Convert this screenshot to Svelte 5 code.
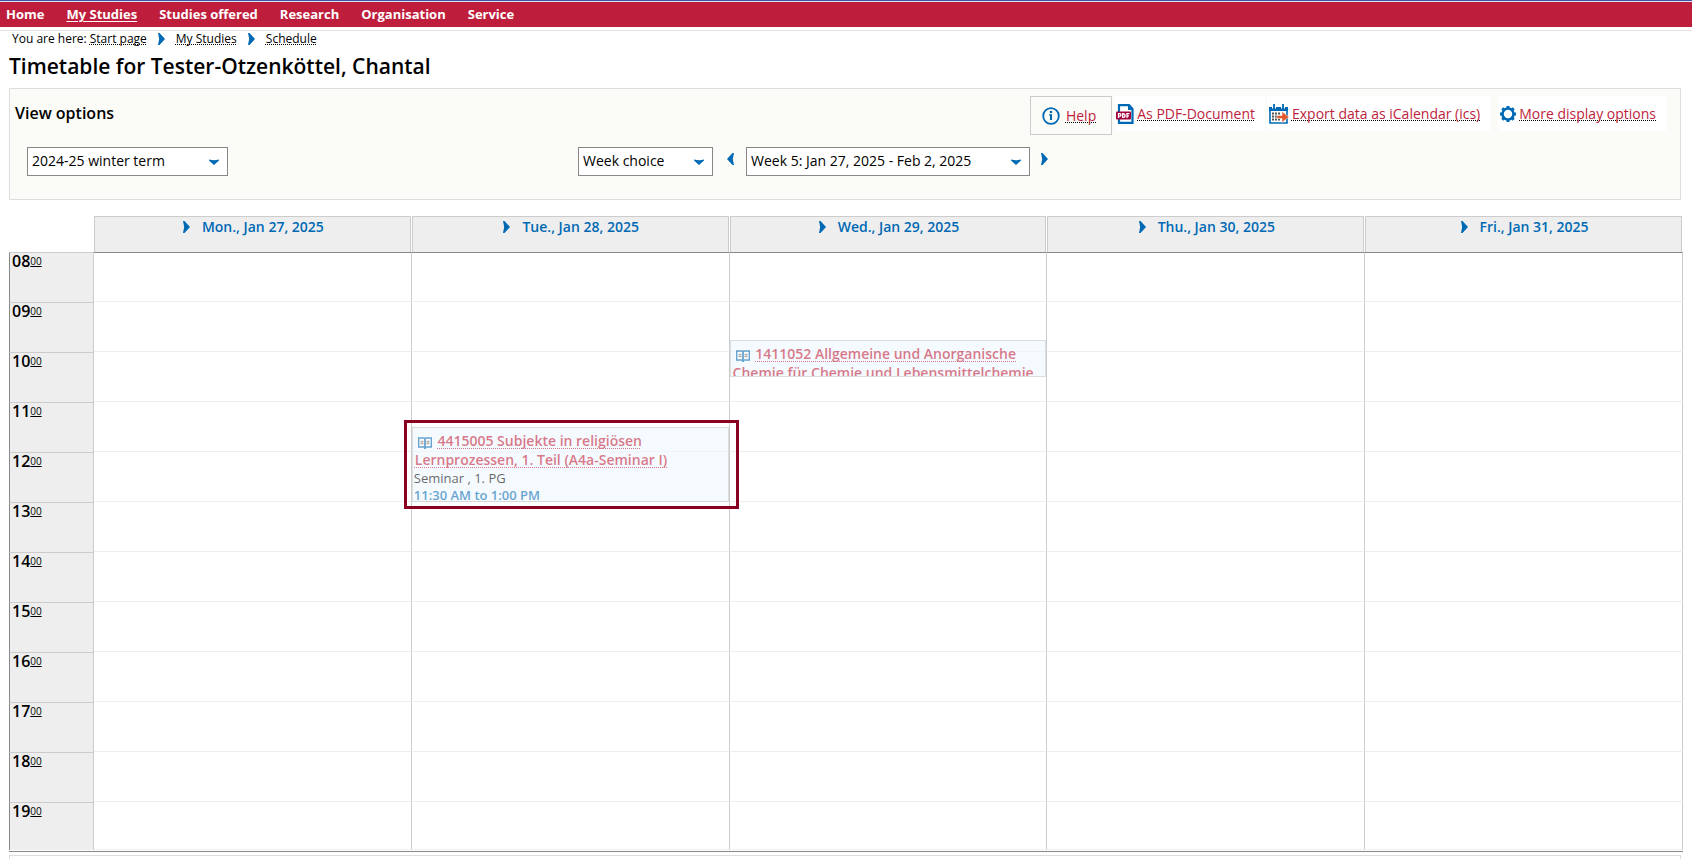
<script>
    const HOUR = 50
    const START = 8

    const nav = ["Home", "My Studies", "Studies offered", "Research", "Organisation", "Service"]
    const crumbs = ["Start page", "My Studies", "Schedule"]
    const days = ["Mon., Jan 27, 2025", "Tue., Jan 28, 2025", "Wed., Jan 29, 2025", "Thu., Jan 30, 2025", "Fri., Jan 31, 2025"]
    const hours = Array.from({ length: 12 }, (_, i) => START + i)

    const events = [
        {
            day: 1,
            from: 11.5,
            to: 13,
            title: "4415005 Subjekte in religiösen Lernprozessen, 1. Teil (A4a-Seminar I)",
            type: "Seminar , 1. PG",
            time: "11:30 AM to 1:00 PM",
            marked: true
        },
        {
            day: 2,
            from: 9.75,
            to: 10.5,
            title: "1411052 Allgemeine und Anorganische Chemie für Chemie und Lebensmittelchemie"
        }
    ]

    let term = $state("2024-25 winter term")
    let mode = $state("Week choice")
    let week = $state("Week 5: Jan 27, 2025 - Feb 2, 2025")

    const eventsAt = (day, hour) => events.filter(e => e.day === day && Math.floor(e.from) === hour)
    const pad = n => String(n).padStart(2, "0")
</script>

{#snippet chevron()}
    <svg class="chevron" width="7" height="12" viewBox="0 0 7 12" aria-hidden="true">
        <path d="M0 0h1.500L7 6 1.500 12H0l1.200-6z" fill="#0069b4" />
    </svg>
{/snippet}

{#snippet caret()}
    <svg class="caret" width="10" height="6" viewBox="0 0 10 6" aria-hidden="true">
        <path d="M0 0.500Q5 2 10 0.500V1.500L5 6 0 1.500z" fill="#0069b4" />
    </svg>
{/snippet}

<nav class="main-nav">
    {#each nav as item}
        <a href="#top" class:current={item === "My Studies"}>{item}</a>
    {/each}
</nav>

<div class="breadcrumb">
    <span>You are here:</span>
    {#each crumbs as crumb, i}
        {#if i > 0}{@render chevron()}{/if}
        <a class="dotted" href="#top">{crumb}</a>
    {/each}
</div>

<main>
    <h1>Timetable for Tester-Otzenköttel, Chantal</h1>

    <section class="options">
        <div class="options-head">
            <h2>View options</h2>
            <div class="tools">
                <a class="tool help" href="#help">
                    <svg width="18" height="18" viewBox="0 0 18 18" aria-hidden="true">
                        <circle cx="9" cy="9" r="7.800" fill="none" stroke="#0069b4" stroke-width="1.800" />
                        <circle cx="9" cy="5" r="1.300" fill="#0069b4" />
                        <path d="M7 7.300h3v5.700h-2V8.500H7z" fill="#0069b4" />
                    </svg>
                    <span class="dotted">Help</span>
                </a>
                <a class="tool" href="#pdf">
                    <svg width="18" height="20" viewBox="0 0 18 20" aria-hidden="true">
                        <path d="M3 8V1.200h10L16.500 5v13.800H3V15" fill="#fff" stroke="#0069b4" stroke-width="2.200" />
                        <path d="M12 1v5h5z" fill="#0069b4" />
                        <rect y="7.500" width="15" height="8" rx="1" fill="#a3003c" />
                        <path d="M2.500 14V9.700h1.200a1.200 1.200 0 0 1 0 2.500H2.500M6.700 9.700v3.700h.5a1.800 1.800 0 0 0 0-3.700zM11 14V9.700h2.500M11 11.800h2" fill="none" stroke="#fff" stroke-width="1.300" />
                    </svg>
                    <span class="dotted">As PDF-Document</span>
                </a>
                <a class="tool" href="#ics">
                    <svg width="20" height="20" viewBox="0 0 20 20" aria-hidden="true">
                        <path d="M1 4h17v15H1z" fill="#fff" stroke="#0069b4" stroke-width="1.600" />
                        <path d="M0 3h19v4H0z" fill="#0069b4" />
                        <path d="M5 0v4.500M14 0v4.500" stroke="#fff" stroke-width="4" />
                        <path d="M5 0v5M14 0v5" stroke="#0069b4" stroke-width="1.800" />
                        <path d="M3 9.500h9M3 12.500h5M3 15.500h9" stroke="#555" stroke-width="2" stroke-dasharray="2 1" />
                        <path d="M8 11.500h5V7.500L20 13l-7 5.500v-4H8z" fill="#e3592b" stroke="#fff" stroke-width=".5" />
                    </svg>
                    <span class="dotted">Export data as iCalendar (ics)</span>
                </a>
                <a class="tool more" href="#more">
                    <svg width="16" height="16" viewBox="0 0 16 16" aria-hidden="true">
                        <circle cx="8" cy="8" r="5.500" fill="none" stroke="#0069b4" stroke-width="2.600" />
                        <path d="M8 0v2.500M8 13.500V16M0 8h2.500M13.500 8H16M2.300 2.300l1.700 1.700M12 12l1.700 1.700M2.300 13.700L4 12M12 4l1.700-1.700" stroke="#0069b4" stroke-width="3" />
                    </svg>
                    <span class="dotted">More display options</span>
                </a>
            </div>
        </div>

        <div class="filters">
            <div class="select term">
                <select aria-label="Term" bind:value={term}>
                    <option>2024-25 winter term</option>
                </select>
                {@render caret()}
            </div>
            <div class="week-nav">
                <div class="select mode">
                    <select aria-label="Display mode" bind:value={mode}>
                        <option>Week choice</option>
                    </select>
                    {@render caret()}
                </div>
                <button class="prev" aria-label="Previous week">{@render chevron()}</button>
                <div class="select week">
                    <select aria-label="Week" bind:value={week}>
                        <option>Week 5: Jan 27, 2025 - Feb 2, 2025</option>
                    </select>
                    {@render caret()}
                </div>
                <button class="next" aria-label="Next week">{@render chevron()}</button>
            </div>
        </div>
    </section>

    <table>
        <thead>
            <tr>
                <td class="corner"></td>
                {#each days as day}
                    <th scope="col">
                        <a class="day" href="#day">{@render chevron()}{day}</a>
                    </th>
                {/each}
            </tr>
        </thead>
        <tbody>
            {#each hours as hour}
                <tr>
                    <th scope="row">{pad(hour)}<sup>00</sup></th>
                    {#each days as _, day}
                        <td>
                            {#each eventsAt(day, hour) as event}
                                <div
                                    class="slot"
                                    class:marked={event.marked}
                                    style="top: {Math.round((event.from - hour) * HOUR)}px; height: {Math.floor((event.to - event.from) * HOUR)}px"
                                >
                                    <div class="event">
                                        <div class="title">
                                            <svg width="14" height="12" viewBox="0 0 14 12" aria-hidden="true">
                                                <path d="M.7 1H6q1 0 1 1 0-1 1-1h5.300v9H8.500L7 11 5.500 10H.7z" fill="#fff" stroke="#0069b4" stroke-width="1.400" />
                                                <path d="M7 1.500V12" stroke="#0069b4" stroke-width="1.800" />
                                                <path d="M2.500 4.500h3M2.500 6.500h3M8.500 4.500h3M8.500 6.500h3" stroke="#777" stroke-width="1.400" />
                                            </svg>
                                            <a class="dotted" href="#event">{event.title}</a>
                                        </div>
                                        {#if event.type}
                                            <div class="type">{event.type}</div>
                                        {/if}
                                        {#if event.time}
                                            <div class="time">{event.time}</div>
                                        {/if}
                                    </div>
                                </div>
                            {/each}
                        </td>
                    {/each}
                </tr>
            {/each}
        </tbody>
    </table>

    <section class="below"></section>
</main>

<style>
    :global(body) {
        background: #fff;
        color: #000;
        font-family: "Open Sans", "Noto Sans", sans-serif;
        font-size: 14px;
        overflow: hidden;
    }

    a {
        color: inherit;
        text-decoration: none;
    }

    svg {
        flex: none;
    }

    .dotted {
        text-decoration: underline dotted 1px;
        text-decoration-skip-ink: none;
        text-underline-offset: 1px;
    }

    .main-nav {
        background: #be1e3c;
        border-top: 1px solid #3f51a3;
        box-shadow: inset 0 1px #dfe3f3;
        color: #fff;
        display: flex;
        font-size: 13px;
        font-weight: 700;
        gap: 22px;
        line-height: 18px;
        padding: 4px 6px;
    }

    .main-nav .current {
        text-decoration: underline;
        text-underline-offset: 2px;
    }

    .breadcrumb {
        align-items: center;
        border-top: 1px solid #e6e0e0;
        display: flex;
        font-size: 12px;
        gap: 13px;
        line-height: 16px;
        margin-top: 3px;
        padding: 0 12px;
    }

    .breadcrumb span {
        margin-right: -10px;
    }

    .breadcrumb .chevron {
        margin: 0 -2px;
    }

    main {
        padding: 0 9px;
    }

    h1 {
        font-size: 21px;
        font-weight: 600;
        line-height: 28px;
        margin: 5px 0 8px;
    }

    .options {
        background: #fbfcf7;
        border: 1px solid #ddd;
        height: 110px;
        margin-right: 2px;
    }

    .options-head {
        align-items: flex-start;
        display: flex;
        justify-content: space-between;
        padding: 7px 14px 0 5px;
    }

    h2 {
        font-size: 16px;
        font-weight: 600;
        line-height: 20px;
        margin: 7px 0;
    }

    .tools {
        align-items: flex-start;
        display: flex;
        gap: 2px;
    }

    .tool {
        align-items: center;
        background: #fff;
        color: #be1e3c;
        display: flex;
        gap: 3px;
        height: 35px;
        padding: 0 10px 0 2px;
    }

    .tool .dotted {
        text-decoration-color: #000;
    }

    .help {
        background: none;
        border: 1px solid #ccc;
        gap: 6px;
        height: 37px;
        padding: 0 15px 0 11px;
    }

    .more {
        margin-left: 6px;
    }

    .filters {
        display: grid;
        grid-template-columns: 1fr 2fr;
        margin-top: 12px;
        padding-left: 17px;
    }

    .week-nav {
        display: flex;
    }

    .select {
        align-items: center;
        display: grid;
    }

    .select > :global(*) {
        grid-area: 1 / 1;
    }

    .select .caret {
        justify-self: end;
        margin-right: 9px;
        pointer-events: none;
    }

    select {
        appearance: none;
        background: #fff;
        border: 1px solid #888;
        border-radius: 0;
        color: #000;
        font: inherit;
        height: 29px;
        padding: 0 4px 2px;
        width: 100%;
    }

    .term {
        width: 201px;
    }

    .mode {
        width: 135px;
    }

    .week {
        width: 284px;
    }

    button {
        background: none;
        border: 0;
        cursor: pointer;
        height: 24px;
        line-height: 0;
        padding: 0 11px;
    }

    .prev {
        padding: 0 12px 0 14px;
    }

    .prev .chevron {
        transform: scaleX(-1);
    }

    table {
        border-bottom: 1px solid #888;
        border-collapse: separate;
        border-spacing: 0;
        margin-top: 16px;
        padding-bottom: 1px;
        table-layout: fixed;
        width: 100%;
    }

    th,
    td {
        box-sizing: border-box;
        padding: 0;
        vertical-align: top;
    }

    .corner {
        border: 0;
        width: 85px;
    }

    .day {
        align-items: flex-start;
        background: #eee;
        border: 1px solid #ccc;
        border-bottom: 0;
        box-sizing: border-box;
        color: #0069b4;
        display: flex;
        font-weight: 600;
        gap: 12px;
        height: 36px;
        justify-content: center;
        line-height: 20px;
        margin-right: 1px;
        padding-left: 2px;
    }

    .day .chevron {
        margin-top: 4px;
    }

    tbody th {
        background: #eee;
        border-left: 1px solid #888;
        border-right: 1px solid #ccc;
        border-top: 1px solid #ccc;
        font-size: 16px;
        font-weight: 600;
        height: 50px;
        line-height: 16px;
        padding-left: 2px;
        text-align: left;
    }

    sup {
        font-size: 10px;
        font-weight: 400;
        line-height: 0;
        text-decoration: underline;
        text-decoration-skip-ink: none;
        text-underline-offset: 1px;
        vertical-align: 2px;
    }

    tbody td {
        border-bottom: 1px solid #eee;
        border-right: 1px solid #ccc;
        position: relative;
    }

    tbody tr:first-child td {
        border-top: 1px solid #888;
    }

    tbody tr:last-child th {
        height: 48px;
    }

    .slot {
        left: 0;
        position: absolute;
        right: 0;
        z-index: 1;
    }

    .marked::after {
        border: 3px solid #8a0020;
        content: '';
        inset: -7px -10px -7px -8px;
        pointer-events: none;
        position: absolute;
    }

    .event {
        background: #f0f8ff;
        border: 1px solid #c8c8c8;
        box-sizing: border-box;
        height: 100%;
        opacity: .6;
        overflow: hidden;
        padding: 3px 1px 0;
    }

    .title {
        color: #be1e3c;
        font-weight: 600;
        line-height: 19px;
        padding: 0 1px 1px;
    }

    .title svg {
        margin: 0 2px 0 3px;
        vertical-align: -3px;
    }

    .title .dotted {
        text-underline-offset: 2px;
    }

    .type,
    .time {
        font-size: 13px;
        line-height: 17px;
    }

    .time {
        color: #0069b4;
        font-weight: 600;
    }

    .below {
        border: 1px solid #ddd;
        border-bottom: 0;
        height: 20px;
        margin: 3px 2px 0 0;
    }
</style>
